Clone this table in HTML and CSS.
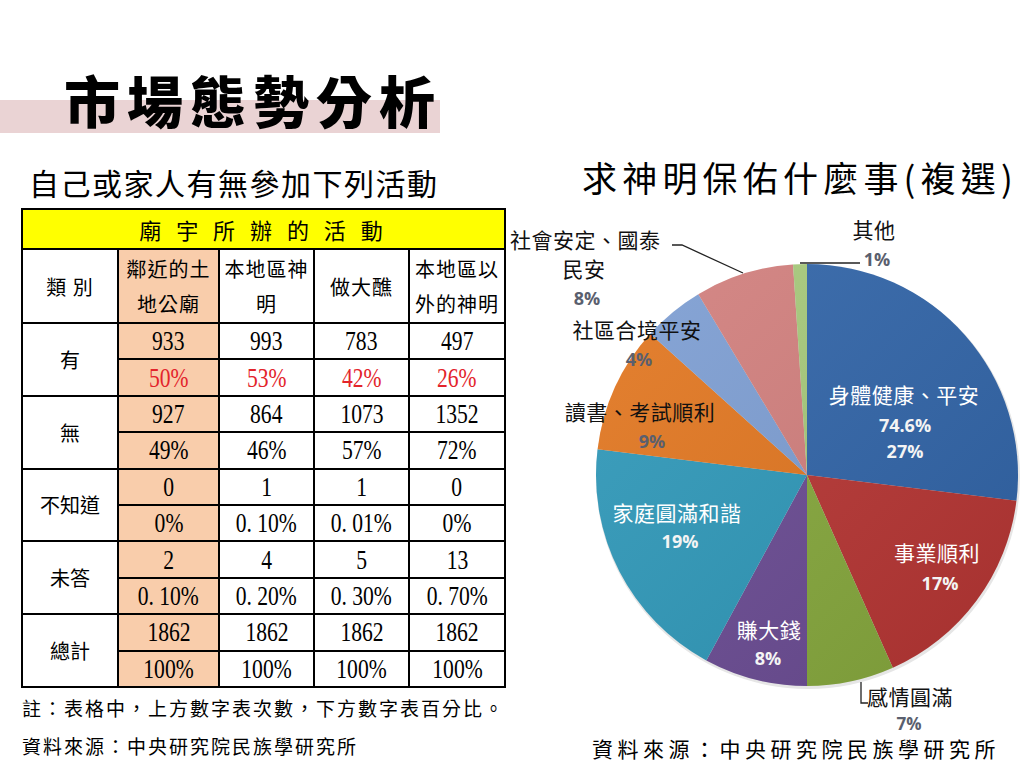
FILE: index.html
```html
<!DOCTYPE html>
<html lang="zh-Hant">
<head>
<meta charset="utf-8">
<title>市場態勢分析</title>
<link rel="stylesheet" href="styles.css">
</head>
<body>
<div class="slide">
  <header class="title-row"><h1 class="title">市場態勢分析</h1></header>
  <main class="content">
    <section class="left">
      <h2 class="subtitle">自己或家人有無參加下列活動</h2>
      <table class="data">
        <colgroup><col class="c1"><col class="c2"><col class="c3"><col class="c4"><col class="c5"></colgroup>
        <tr class="r-head"><th colspan="5" class="yellow">廟 宇 所 辦 的 活 動</th></tr>
        <tr class="r-cat"><th>類 別</th><th class="peach">鄰近的土<br>地公廟</th><th>本地區神<br>明</th><th>做大醮</th><th>本地區以<br>外的神明</th></tr>
        <tr class="r-sub"><th rowspan="2">有</th><td class="peach"><span class="num">933</span></td><td><span class="num">993</span></td><td><span class="num">783</span></td><td><span class="num">497</span></td></tr>
        <tr class="r-sub red"><td class="peach"><span class="num">50%</span></td><td><span class="num">53%</span></td><td><span class="num">42%</span></td><td><span class="num">26%</span></td></tr>
        <tr class="r-sub"><th rowspan="2">無</th><td class="peach"><span class="num">927</span></td><td><span class="num">864</span></td><td><span class="num">1073</span></td><td><span class="num">1352</span></td></tr>
        <tr class="r-sub"><td class="peach"><span class="num">49%</span></td><td><span class="num">46%</span></td><td><span class="num">57%</span></td><td><span class="num">72%</span></td></tr>
        <tr class="r-sub"><th rowspan="2">不知道</th><td class="peach"><span class="num">0</span></td><td><span class="num">1</span></td><td><span class="num">1</span></td><td><span class="num">0</span></td></tr>
        <tr class="r-sub"><td class="peach"><span class="num">0%</span></td><td><span class="num">0. 10%</span></td><td><span class="num">0. 01%</span></td><td><span class="num">0%</span></td></tr>
        <tr class="r-sub"><th rowspan="2">未答</th><td class="peach"><span class="num">2</span></td><td><span class="num">4</span></td><td><span class="num">5</span></td><td><span class="num">13</span></td></tr>
        <tr class="r-sub"><td class="peach"><span class="num">0. 10%</span></td><td><span class="num">0. 20%</span></td><td><span class="num">0. 30%</span></td><td><span class="num">0. 70%</span></td></tr>
        <tr class="r-sub"><th rowspan="2">總計</th><td class="peach"><span class="num">1862</span></td><td><span class="num">1862</span></td><td><span class="num">1862</span></td><td><span class="num">1862</span></td></tr>
        <tr class="r-sub"><td class="peach"><span class="num">100%</span></td><td><span class="num">100%</span></td><td><span class="num">100%</span></td><td><span class="num">100%</span></td></tr>
      </table>
      <p class="note">註：表格中，上方數字表次數，下方數字表百分比。</p>
      <p class="note">資料來源：中央研究院民族學研究所</p>
    </section>
    <section class="right">
      <h2 class="heading">求神明保佑什麼事(複選)</h2>
      <svg class="pie" width="519" height="521" viewBox="0 0 519 521">
        <defs>
          <linearGradient id="shade" x1="0" y1="0" x2="1" y2="1">
            <stop offset="0" stop-color="#ffffff" stop-opacity="0.08"/>
            <stop offset="1" stop-color="#000000" stop-opacity="0.10"/>
          </linearGradient>
        </defs>
        <circle cx="303" cy="267" r="212" fill="#e6e6e6"/>
        <path d="M302,265 L302,54 A211,211 0 0 1 511.43,290.71 Z" fill="#3064a8"/>
        <path d="M302,265 L511.43,290.71 A211,211 0 0 1 387.82,457.76 Z" fill="#b73533"/>
        <path d="M302,265 L387.82,457.76 A211,211 0 0 1 302,476 Z" fill="#86a83c"/>
        <path d="M302,265 L302,476 A211,211 0 0 1 201.32,450.43 Z" fill="#6a4b93"/>
        <path d="M302,265 L201.32,450.43 A211,211 0 0 1 92.57,239.29 Z" fill="#2e98b9"/>
        <path d="M302,265 L92.57,239.29 A211,211 0 0 1 145.20,123.81 Z" fill="#e2761f"/>
        <path d="M302,265 L145.20,123.81 A211,211 0 0 1 193.33,84.14 Z" fill="#7d9ed3"/>
        <path d="M302,265 L193.33,84.14 A211,211 0 0 1 288.02,54.46 Z" fill="#d27f7d"/>
        <path d="M302,265 L288.02,54.46 A211,211 0 0 1 302,54 Z" fill="#a6c97a"/>
        <circle cx="302" cy="265" r="211" fill="url(#shade)"/>

        <polyline class="lead" points="167,35 177,35 238,63"/>
        <polyline class="lead" points="295,53 355,53"/>
        <polyline class="lead" points="356,472 356,493 363,493"/>

        <text class="lbl" x="5" y="38">社會安定、國泰</text>
        <text class="lbl mid" x="79" y="67">民安</text>
        <text class="pct out mid" x="82" y="95">8%</text>
        <text class="lbl mid" x="369" y="28">其他</text>
        <text class="pct out mid" x="372" y="56">1%</text>
        <text class="lbl mid" x="132" y="128">社區合境平安</text>
        <text class="pct out mid" x="134" y="156">4%</text>
        <text class="lbl mid" x="135" y="210">讀書、考試順利</text>
        <text class="pct out mid" x="147" y="238">9%</text>
        <text class="lbl w mid" x="399" y="193">身體健康、平安</text>
        <text class="pct w mid" x="400" y="222">74.6%</text>
        <text class="pct w mid" x="400" y="248">27%</text>
        <text class="lbl w mid" x="172" y="311">家庭圓滿和諧</text>
        <text class="pct w mid" x="175" y="338">19%</text>
        <text class="lbl w mid" x="432" y="351">事業順利</text>
        <text class="pct w mid" x="435" y="380">17%</text>
        <text class="lbl w mid" x="264" y="428">賺大錢</text>
        <text class="pct w mid" x="263" y="455">8%</text>
        <text class="lbl mid" x="405" y="495">感情圓滿</text>
        <text class="pct out small mid" x="404" y="520">7%</text>
      </svg>
      <p class="source">資料來源：中央研究院民族學研究所</p>
    </section>
  </main>
</div>
</body>
</html>
```

FILE: styles.css
```css
* { box-sizing: border-box; margin: 0; padding: 0; }
html, body { background: #ffffff; }
body {
  width: 1024px;
  height: 768px;
  overflow: hidden;
  font-family: "Noto Sans CJK TC", "Noto Sans CJK SC", sans-serif;
  color: #000000;
}
.slide { width: 1024px; height: 768px; }

.title-row { height: 133px; padding-top: 64px; }
.title {
  width: 440px;
  height: 69px;
  padding-left: 64px;
  font-size: 56px;
  line-height: 69px;
  font-weight: 900;
  letter-spacing: 7px;
  white-space: nowrap;
  background: linear-gradient(to bottom, transparent 0, transparent 36px, #ead3d4 36px, #ead3d4 69px);
}

.content { display: flex; }
.left { width: 505px; padding-left: 21px; }
.right { width: 519px; }

.subtitle {
  margin-top: 31px;
  padding-left: 8px;
  height: 36px;
  font-size: 30px;
  line-height: 36px;
  font-weight: 400;
  letter-spacing: 1.5px;
  white-space: nowrap;
}

.data {
  margin-top: 8px;
  width: 483px;
  border-collapse: collapse;
  table-layout: fixed;
  border: 2px solid #000;
}
.data .c1 { width: 96px; }
.data .c2 { width: 101px; }
.data .c3 { width: 95px; }
.data .c4 { width: 95px; }
.data .c5 { width: 96px; }
.data th, .data td {
  border: 2px solid #000;
  padding: 0;
  text-align: center;
  vertical-align: middle;
  font-weight: 400;
  font-size: 20px;
}
.data .r-head { height: 40px; }
.data .r-head th { font-size: 22px; letter-spacing: 5px; line-height: 36px; }
.data .r-cat { height: 74px; }
.data .r-cat th { line-height: 35px; letter-spacing: 1px; }
.data .r-sub { height: 36.4px; }
.yellow { background: #ffff00; }
.peach { background: #f9cdab; }
.red td { color: #e3242b; }

.num {
  display: inline-block;
  font-family: "Liberation Serif", "Times New Roman", serif;
  font-size: 27px;
  line-height: 30px;
  transform: scaleX(0.8);
  white-space: pre;
}

.note {
  font-size: 19px;
  line-height: 38px;
  letter-spacing: 2px;
  padding-left: 1px;
  white-space: nowrap;
}
.data + .note { margin-top: 1px; }

.heading {
  margin-top: 24px;
  padding-left: 77px;
  height: 40px;
  font-size: 35px;
  line-height: 40px;
  font-weight: 400;
  letter-spacing: 5.2px;
  white-space: nowrap;
}
.pie { display: block; margin-top: 13px; overflow: visible; }
.pie .lead { fill: none; stroke: #222; stroke-width: 1.3; }
.pie .lbl {
  font-family: "Noto Sans CJK TC", "Noto Sans CJK SC", sans-serif;
  font-size: 21px;
  letter-spacing: 0.5px;
  fill: #111;
}
.pie .mid { text-anchor: middle; }
.pie .w { fill: #ffffff; }
.pie .pct {
  font-family: "Open Sans", "Liberation Sans", sans-serif;
  font-weight: 700;
  font-size: 18px;
}
.pie .pct.small { font-size: 17px; }
.pie .pct.out { fill: #5a5f6e; }
.pie .pct.w { fill: #f4f4f4; }

.source {
  margin-top: 5px;
  padding-left: 87px;
  font-size: 21px;
  line-height: 24px;
  letter-spacing: 4.5px;
  white-space: nowrap;
}
```
